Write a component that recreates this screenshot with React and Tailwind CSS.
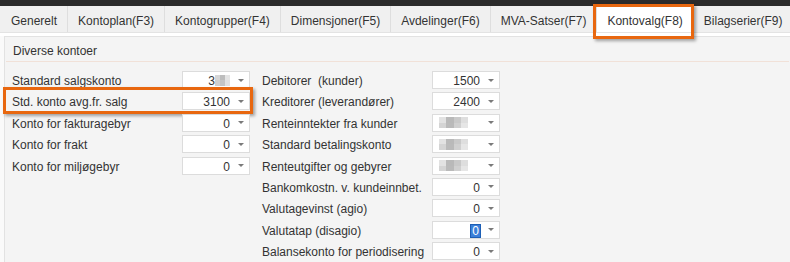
import React from 'react';

const tabs = [
    'Generelt',
    'Kontoplan(F3)',
    'Kontogrupper(F4)',
    'Dimensjoner(F5)',
    'Avdelinger(F6)',
    'MVA-Satser(F7)',
    'Kontovalg(F8)',
    'Bilagserier(F9)',
];

const leftRows = [
    { label: 'Standard salgskonto', value: '3', blur: true },
    { label: 'Std. konto avg.fr. salg', value: '3100', highlight: true },
    { label: 'Konto for fakturagebyr', value: '0' },
    { label: 'Konto for frakt', value: '0' },
    { label: 'Konto for miljøgebyr', value: '0' },
];

const rightRows = [
    { label: 'Debitorer  (kunder)', value: '1500' },
    { label: 'Kreditorer (leverandører)', value: '2400' },
    { label: 'Renteinntekter fra kunder', blur: true },
    { label: 'Standard betalingskonto', blur: true },
    { label: 'Renteutgifter og gebyrer', blur: true },
    { label: 'Bankomkostn. v. kundeinnbet.', value: '0' },
    { label: 'Valutagevinst (agio)', value: '0' },
    { label: 'Valutatap (disagio)', value: '0', selected: true },
    { label: 'Balansekonto for periodisering', value: '0' },
];

// pixelated "censored" number
function Blur({ small }) {
    const shades = small
        ? ['#d6d6d6', '#bdbdbd', '#e4e4e4', '#cfcfcf', '#c4c4c4', '#e0e0e0']
        : ['#e2e2e2', '#b9b9b9', '#c9c9c9', '#dedede', '#d4d4d4', '#bababa', '#d0d0d0', '#e6e6e6'];
    return (
        <div className={small ? 'grid grid-cols-3 w-[15px] h-[11px]' : 'grid grid-cols-4 w-[29px] h-[11px]'}>
            {shades.map((c, i) => (
                <div key={i} style={{ backgroundColor: c }} />
            ))}
        </div>
    );
}

function Caret() {
    return (
        <svg width="6" height="3" viewBox="0 0 6 3" className="ml-[8px] shrink-0">
            <polygon points="0,0 6,0 3,3" fill="#7a7a7a" />
        </svg>
    );
}

function Field({ label, value, blur, highlight, selected }) {
    return (
        <div className="relative flex h-[18px] items-center">
            <span className="w-[170px] translate-y-[1px] whitespace-pre">{label}</span>
            <div className="flex h-[18px] w-[68px] items-center justify-end border border-[#dcdcdc] bg-white pr-[5px]">
                {value && !selected && <span className="translate-y-[1px]">{value}</span>}
                {selected && (
                    <span className="translate-y-[1px] bg-[#3b7fd9] px-[1px] leading-[12px] text-white outline outline-1 outline-[#1d5fb5]">
                        {value}
                    </span>
                )}
                {blur && !value && <div className="mr-[12px]"><Blur /></div>}
                {blur && value && <Blur small />}
                <Caret />
            </div>
            {highlight && (
                <div className="absolute -left-[9px] -right-[3px] -top-[5px] -bottom-[4px] border-[3px] border-[#e8670f] shadow-[2px_2px_3px_rgba(0,0,0,0.35)]" />
            )}
        </div>
    );
}

export default function App() {
    return (
        <div className="h-[262px] w-[790px] overflow-hidden bg-[#fafafa] font-['Liberation_Sans',Arial,sans-serif] text-[12px] text-[#333]">
            <div className="h-[6px] bg-[#2b2b2b]" />
            <div className="flex h-[27px] border-b border-[#e3e3e3] bg-[#f0f0f0] pl-[1px]">
                {tabs.map((t, i) => {
                    const active = t === 'Kontovalg(F8)';
                    return (
                        <div
                            key={i}
                            className={
                                'relative flex shrink-0 items-center whitespace-nowrap px-[10px] ' +
                                (active ? 'bg-white ' : '') +
                                (i < tabs.length - 1 ? 'border-r border-[#dedede]' : '')
                            }
                        >
                            <span className="translate-y-[2px]">{t}</span>
                            {active && (
                                <div className="absolute -left-[4px] -right-[1px] -top-[2px] -bottom-[7px] z-10 border-[3px] border-[#e8670f] shadow-[2px_2px_3px_rgba(0,0,0,0.35)]" />
                            )}
                        </div>
                    );
                })}
            </div>
            <div className="h-[3px] bg-white" />
            <div className="ml-[4px] h-full border-l border-t border-[#e2e2e2] bg-[#f4f4f4]">
                <div className="mx-[1px] flex h-[25px] items-center border-b border-[#f1e1d8] pl-[7px]">
                    <span className="translate-y-[2px]">Diverse kontoer</span>
                </div>
                <div className="flex gap-[12px] pl-[7px] pt-[9px]">
                    <div className="flex flex-col gap-[3.4px]">
                        {leftRows.map((r, i) => (
                            <Field key={i} {...r} />
                        ))}
                    </div>
                    <div className="flex flex-col gap-[3.4px]">
                        {rightRows.map((r, i) => (
                            <Field key={i} {...r} />
                        ))}
                    </div>
                </div>
            </div>
        </div>
    );
}
